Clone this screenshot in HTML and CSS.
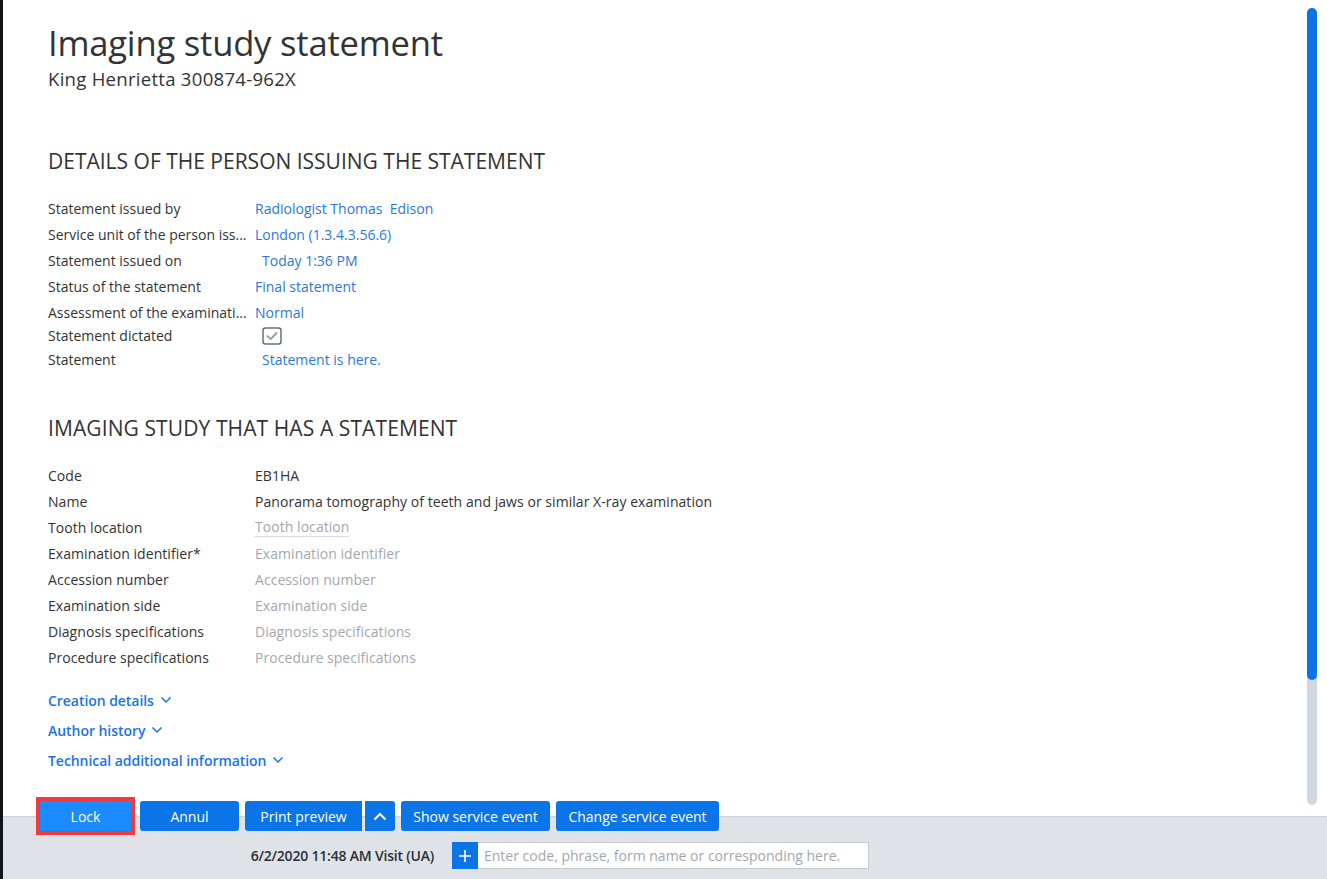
FILE: index.html
```html
<!DOCTYPE html>
<html lang="en">
<head>
<meta charset="utf-8">
<title>Imaging study statement</title>
<link rel="stylesheet" href="styles.css">
</head>
<body>
<div class="app">
  <div class="workspace">
    <main class="content">
      <h1 class="title">Imaging study statement</h1>
      <div class="subtitle">King Henrietta 300874-962X</div>

      <h2 class="section-title first">DETAILS OF THE PERSON ISSUING THE STATEMENT</h2>
      <div class="fields">
        <div class="row"><span class="label">Statement issued by</span><span class="value link">Radiologist Thomas&nbsp; Edison</span></div>
        <div class="row"><span class="label">Service unit of the person iss...</span><span class="value link">London (1.3.4.3.56.6)</span></div>
        <div class="row"><span class="label">Statement issued on</span><span class="value link indent">Today 1:36 PM</span></div>
        <div class="row"><span class="label">Status of the statement</span><span class="value link">Final statement</span></div>
        <div class="row"><span class="label">Assessment of the examinati...</span><span class="value link">Normal</span></div>
        <div class="row short"><span class="label">Statement dictated</span><span class="value indent">
          <svg class="check" width="20" height="18" viewBox="0 0 20 18"><rect x="1" y="1" width="18" height="16" rx="2.5" fill="#fff" stroke="#6b6f74" stroke-width="1.5"/><path d="M5.5 9.2 L8.8 12 L14.5 6" fill="none" stroke="#9aa0a6" stroke-width="2" stroke-linecap="round" stroke-linejoin="round"/></svg>
        </span></div>
        <div class="row"><span class="label">Statement</span><span class="value link indent">Statement is here.</span></div>
      </div>

      <h2 class="section-title second">IMAGING STUDY THAT HAS A STATEMENT</h2>
      <div class="fields narrow">
        <div class="row"><span class="label">Code</span><span class="value">EB1HA</span></div>
        <div class="row"><span class="label">Name</span><span class="value">Panorama tomography of teeth and jaws or similar X-ray examination</span></div>
        <div class="row"><span class="label">Tooth location</span><span class="value placeholder underline">Tooth location</span></div>
        <div class="row"><span class="label">Examination identifier*</span><span class="value placeholder">Examination identifier</span></div>
        <div class="row"><span class="label">Accession number</span><span class="value placeholder">Accession number</span></div>
        <div class="row"><span class="label">Examination side</span><span class="value placeholder">Examination side</span></div>
        <div class="row"><span class="label">Diagnosis specifications</span><span class="value placeholder">Diagnosis specifications</span></div>
        <div class="row"><span class="label">Procedure specifications</span><span class="value placeholder">Procedure specifications</span></div>
      </div>

      <div class="expanders">
        <div class="expander">Creation details <svg width="12" height="8" viewBox="0 0 12 8"><path d="M1.5 1.5 L6 6 L10.5 1.5" fill="none" stroke="#1a73e8" stroke-width="1.5"/></svg></div>
        <div class="expander">Author history <svg width="12" height="8" viewBox="0 0 12 8"><path d="M1.5 1.5 L6 6 L10.5 1.5" fill="none" stroke="#1a73e8" stroke-width="1.5"/></svg></div>
        <div class="expander">Technical additional information <svg width="12" height="8" viewBox="0 0 12 8"><path d="M1.5 1.5 L6 6 L10.5 1.5" fill="none" stroke="#1a73e8" stroke-width="1.5"/></svg></div>
      </div>
    </main>
    <div class="scrollbar"><div class="track"><div class="thumb"></div></div></div>
  </div>

  <footer class="footer">
    <div class="actions">
      <span class="focus-ring"><button class="btn lock">Lock</button></span>
      <button class="btn w-annul">Annul</button>
      <span class="split">
        <button class="btn w-print">Print preview</button>
        <button class="btn chevron"><svg width="14" height="9" viewBox="0 0 14 9"><path d="M1.5 7.5 L7 2 L12.5 7.5" fill="none" stroke="#fff" stroke-width="2"/></svg></button>
      </span>
      <button class="btn w-show">Show service event</button>
      <button class="btn w-change">Change service event</button>
    </div>
    <div class="entry-row">
      <span class="visit">6/2/2020 11:48 AM Visit (UA)</span>
      <div class="entry">
        <span class="plus"><svg width="14" height="14" viewBox="0 0 14 14"><path d="M7 1 V13 M1 7 H13" stroke="#fff" stroke-width="1.6"/></svg></span>
        <span class="entry-text">Enter code, phrase, form name or corresponding here.</span>
      </div>
    </div>
  </footer>
</div>
</body>
</html>
```

FILE: styles.css
```css
* { box-sizing: border-box; }
html, body { margin: 0; padding: 0; height: 100%; }
body {
  font-family: "Open Sans", "Noto Sans", sans-serif;
  color: #333;
  background: #fff;
  overflow: hidden;
}
.app {
  height: 100vh;
  display: flex;
  flex-direction: column;
  border-left: 3px solid #121417;
}
.workspace {
  flex: 1;
  display: flex;
  min-height: 0;
}
.content {
  flex: 1;
  padding-left: 45px;
  min-width: 0;
}
.title {
  margin: 23px 0 0;
  font-size: 34.6px;
  line-height: 40px;
  font-weight: 400;
  letter-spacing: -0.2px;
}
.subtitle {
  margin-top: 5px;
  font-size: 18.6px;
  line-height: 22px;
  letter-spacing: 0.25px;
}
.section-title {
  margin: 0;
  font-size: 21px;
  line-height: 30px;
  font-weight: 400;
  color: #333;
}
.section-title.first { margin-top: 56px; }
.section-title.second { margin-top: 41px; letter-spacing: 0.1px; }
.fields { margin-top: 19px; font-size: 14px; }
.fields.narrow { margin-top: 19px; letter-spacing: 0.05px; }
.row {
  display: flex;
  align-items: center;
  height: 26px;
}
.row.short { height: 21px; }
.label { width: 207px; flex: none; white-space: nowrap; }
.value { white-space: nowrap; }
.link { color: #2a78e0; }
.indent { padding-left: 7px; }
.check { display: block; }
.placeholder { color: #a3a8ae; }
.underline { border-bottom: 1px solid #d7dadd; line-height: 18px; }
.expanders { margin-top: 15px; }
.expander {
  height: 30px;
  display: flex;
  align-items: center;
  gap: 6px;
  color: #1a73e8;
  font-size: 14px;
  font-weight: 600;
  letter-spacing: -0.05px;
}
.scrollbar {
  width: 30px;
  flex: none;
  padding: 8px 10px 0;
  display: flex;
}
.track {
  width: 10px;
  flex: 1;
  margin-bottom: -8px;
  background: #d1d7de;
  border-radius: 5px;
  position: relative;
  z-index: 1;
}
.thumb {
  height: 672px;
  background: #0a73e6;
  border-radius: 5px;
}
.footer {
  height: 82px;
  flex: none;
  background: linear-gradient(to bottom, #fff 0, #fff 19px, #cfd4d9 19px, #cfd4d9 20px, #dfe3e8 20px);
  padding: 4px 0 0 37px;
}
.actions {
  display: flex;
  align-items: center;
  height: 30px;
  gap: 6px;
}
.btn {
  height: 30px;
  border: none;
  border-radius: 3px;
  background: #0b74e6;
  color: #fff;
  font-family: inherit;
  font-size: 14px;
  padding: 0;
  cursor: pointer;
}
.focus-ring {
  display: inline-flex;
  outline: 4px solid #ef3a42;
  outline-offset: 0;
  margin-right: 3px;
}
.btn.lock { width: 91px; background: #1b8bff; border-radius: 0; }
.w-annul { width: 99px; }
.w-print { width: 117px; border-radius: 3px 0 0 3px; }
.split { display: inline-flex; gap: 3px; }
.chevron { width: 30px; border-radius: 0 3px 3px 0; display: flex; align-items: center; justify-content: center; }
.w-show { width: 149px; }
.w-change { width: 163px; }
.entry-row {
  display: flex;
  align-items: center;
  margin-top: 11px;
  height: 27px;
}
.visit {
  width: 394px;
  text-align: right;
  font-size: 14px;
  font-weight: 600;
  color: #2b2f33;
  letter-spacing: -0.2px;
}
.entry {
  margin-left: 18px;
  width: 417px;
  height: 27px;
  display: flex;
  background: #fff;
  border: 1px solid #c4c9ce;
}
.plus {
  width: 26px;
  margin: -1px 0 -1px -1px;
  background: #0b74e6;
  display: flex;
  align-items: center;
  justify-content: center;
}
.entry-text {
  padding-left: 6px;
  font-size: 14px;
  line-height: 25px;
  color: #a3a8ae;
  white-space: nowrap;
}
```
